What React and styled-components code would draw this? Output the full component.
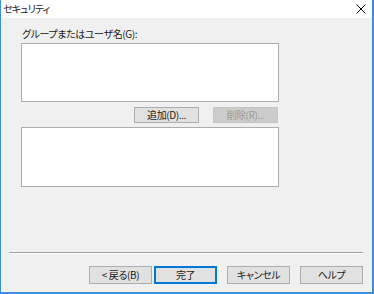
import React from "react";
import styled, { createGlobalStyle } from "styled-components";

const Global = createGlobalStyle`
  html, body { margin: 0; padding: 0; background: #f0f0f0; }
  body { font-family: "Noto Sans CJK JP", "Noto Sans", sans-serif; }
`;

const Window = styled.div`
  box-sizing: border-box;
  width: 374px;
  height: 294px;
  display: flex;
  flex-direction: column;
  background: #f0f0f0;
  border-left: 1px solid #3d8fd8;
  border-right: 2px solid #3d8fd8;
  border-bottom: 2px solid #3d8fd8;
  font-family: "Noto Sans CJK JP", "Noto Sans", sans-serif;
  font-size: 10px;
  letter-spacing: -0.4px;
  color: #1a1a1a;
  font-feature-settings: "palt";
`;

const TitleBar = styled.div`
  height: 18px;
  flex: none;
  background: #fff;
  display: flex;
  align-items: center;
  justify-content: space-between;
  padding: 0 6px 0 2px;
`;

const Title = styled.span`
  font-size: 10px;
  letter-spacing: -0.9px;
  line-height: 18px;
`;

const CloseIcon = styled.svg`
  width: 10px;
  height: 10px;
  display: block;
`;

const Body = styled.div`
  flex: 1;
  display: flex;
  flex-direction: column;
  padding: 9px 0 0 20px;
`;

const Label = styled.div`
  line-height: 14px;
  height: 14px;
  padding-left: 1px;
  margin-bottom: 2px;
`;

const ListBox = styled.div`
  box-sizing: border-box;
  width: 258px;
  height: ${(p) => p.$h}px;
  background: #fff;
  border: 1px solid #abadb3;
`;

const ButtonRow = styled.div`
  display: flex;
  gap: 14px;
  padding-left: 113px;
  margin: 5px 0 4px;
`;

const Button = styled.button`
  box-sizing: border-box;
  width: ${(p) => p.$w || 63}px;
  height: ${(p) => p.$h || 16}px;
  margin: 0;
  padding: 0;
  font-family: inherit;
  font-size: 10px;
  letter-spacing: -0.4px;
  line-height: 1;
  font-feature-settings: "palt";
  color: ${(p) => (p.disabled ? "#9a9a9a" : "#1a1a1a")};
  background: ${(p) => (p.disabled ? "#cccccc" : "#e1e1e1")};
  border: 1px solid ${(p) => (p.disabled ? "#c4c4c4" : p.$default ? "#0078d7" : "#adadad")};
  box-shadow: ${(p) => (p.$default ? "inset 0 0 0 1px #0078d7" : "none")};
  display: flex;
  align-items: center;
  justify-content: center;
`;

const Footer = styled.div`
  flex: none;
  padding-bottom: 8px;
`;

const Separator = styled.div`
  margin-left: 8px;
  width: 354px;
  height: 1px;
  background: #a0a0a0;
  border-bottom: 1px solid #fff;
`;

const FooterButtons = styled.div`
  display: flex;
  padding-left: 88px;
  margin-top: 12px;
`;

const FooterButton = styled(Button)`
  margin-left: ${(p) => p.$ml || 0}px;
`;

export default function App() {
  return (
    <>
      <Global />
      <Window>
        <TitleBar>
          <Title>セキュリティ</Title>
          <CloseIcon viewBox="0 0 10 10">
            <path d="M0.5 0.5 L9.5 9.5 M9.5 0.5 L0.5 9.5" stroke="#000" strokeWidth="1" fill="none" />
          </CloseIcon>
        </TitleBar>
        <Body>
          <Label>グループまたはユーザ名(G):</Label>
          <ListBox $h={59} />
          <ButtonRow>
            <Button $w={65}>追加(D)...</Button>
            <Button $w={65} disabled>削除(R)...</Button>
          </ButtonRow>
          <ListBox $h={60} />
        </Body>
        <Footer>
          <Separator />
          <FooterButtons>
            <FooterButton $h={18}>&lt; 戻る(B)</FooterButton>
            <FooterButton $h={18} $ml={2} $default>完了</FooterButton>
            <FooterButton $h={18} $ml={10}>キャンセル</FooterButton>
            <FooterButton $h={18} $ml={10}>ヘルプ</FooterButton>
          </FooterButtons>
        </Footer>
      </Window>
    </>
  );
}
